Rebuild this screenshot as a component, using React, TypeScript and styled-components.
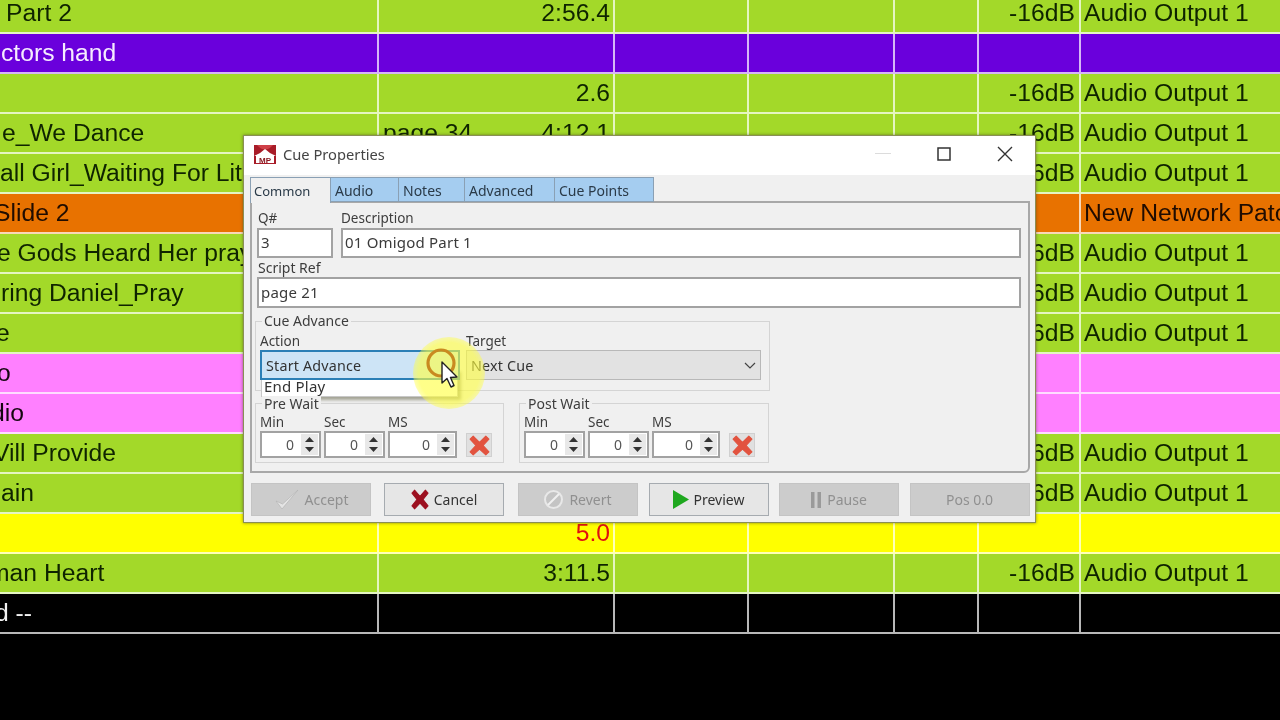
import styled, { createGlobalStyle } from 'styled-components'

const GlobalStyle = createGlobalStyle`
  html, body { margin: 0; padding: 0; background: #000; overflow: hidden; }
  * { box-sizing: border-box; }
`

const COLORS: Record<string, { bg: string; fg: string }> = {
  green: { bg: '#a3d929', fg: '#0f2400' },
  purple: { bg: '#6a00dc', fg: '#f6ecff' },
  orange: { bg: '#e87200', fg: '#200c00' },
  pink: { bg: '#ff80ff', fg: '#14060f' },
  yellow: { bg: '#ffff00', fg: '#e01010' },
  black: { bg: '#000000', fg: '#f2f2f2' },
}

interface Cue {
  color: keyof typeof COLORS
  name?: string
  indent?: number
  page?: string
  time?: string
  level?: string
  output?: string
}

const AUDIO = { level: '-16dB', output: 'Audio Output 1' }

const cues: Cue[] = [
  { color: 'green', name: 'Part 2', indent: 6, time: '2:56.4', ...AUDIO },
  { color: 'purple', name: 'ctors hand', indent: 1 },
  { color: 'green', time: '2.6', ...AUDIO },
  { color: 'green', name: 'e_We Dance', indent: 2, page: 'page 34', time: '4:12.1', ...AUDIO },
  { color: 'green', name: 'all Girl_Waiting For Lit', ...AUDIO },
  { color: 'orange', name: 'Slide 2', indent: -6, output: 'New Network Patch' },
  { color: 'green', name: 'e Gods Heard Her pray', indent: -3, ...AUDIO },
  { color: 'green', name: 'ring Daniel_Pray', indent: 1, ...AUDIO },
  { color: 'green', name: 'e', indent: -4, ...AUDIO },
  { color: 'pink', name: 'o', indent: -3 },
  { color: 'pink', name: 'dio', indent: -9 },
  { color: 'green', name: 'Vill Provide', indent: -7, ...AUDIO },
  { color: 'green', name: 'ain', indent: 1, ...AUDIO },
  { color: 'yellow', time: '5.0' },
  { color: 'green', name: 'man Heart', indent: -11, time: '3:11.5', ...AUDIO },
  { color: 'black', name: 'd --', indent: -5 },
]

const Screen = styled.div`
  position: relative;
  width: 1280px;
  height: 720px;
  overflow: hidden;
  background: #000;
  filter: blur(0.35px);
`

const CueTable = styled.div`
  margin-top: -6px;
  font-family: 'Liberation Sans', Arial, sans-serif;
  font-size: 24.7px;
`

const CueRow = styled.div<{ $color: keyof typeof COLORS }>`
  display: grid;
  grid-template-columns: 379px 236px 134px 146px 84px 102px 199px;
  height: 40px;
  background: ${(p) => COLORS[p.$color].bg};
  color: ${(p) => COLORS[p.$color].fg};
  border-bottom: 2px solid rgba(255, 255, 255, 0.72);
`

const Cell = styled.div`
  display: flex;
  align-items: center;
  justify-content: space-between;
  padding: 0 4px 0 0;
  white-space: nowrap;
  overflow: hidden;
  border-right: 2px solid rgba(255, 255, 255, 0.72);
  &:last-child { border-right: 0; padding-left: 3px; }
`

const CueName = styled.span<{ $indent?: number }>`
  margin-left: ${(p) => p.$indent ?? 0}px;
`

const TimeCell = styled(Cell)`
  padding: 0 3px 0 4px;
`

const TimeText = styled.span`
  margin-left: auto;
`

const LevelCell = styled(Cell)`
  justify-content: flex-end;
`

const Dialog = styled.div`
  position: absolute;
  z-index: 1;
  left: 243px;
  top: 135px;
  width: 793px;
  height: 388px;
  background: #f0f0f0;
  border: 1px solid #8a8f55;
  box-shadow: 0 0 3px rgba(60, 60, 30, 0.6);
  font-family: 'Noto Sans', Tahoma, sans-serif;
  font-size: 14px;
  color: #333;
`

const TitleBar = styled.div`
  display: flex;
  align-items: center;
  height: 39px;
  background: #fff;
  padding: 0 0 3px 10px;
`

const TitleText = styled.div`
  margin-left: 7px;
  font-size: 14.7px;
  color: #444;
`

const WindowButtons = styled.div`
  display: flex;
  margin-left: auto;
  align-items: center;
`

const WindowButton = styled.div`
  display: flex;
  align-items: center;
  justify-content: center;
  width: 61px;
  height: 36px;
`

const Body = styled.div`
  padding: 2px 5px 0 6px;
`

const TabStrip = styled.div`
  display: flex;
  height: 25px;
`

const Tab = styled.div<{ $active?: boolean; $width: number }>`
  display: flex;
  align-items: center;
  width: ${(p) => p.$width}px;
  height: ${(p) => (p.$active ? 26 : 25)}px;
  padding-left: ${(p) => (p.$active ? 3 : 4)}px;
  padding-top: ${(p) => (p.$active ? 1 : 1)}px;
  background: ${(p) => (p.$active ? '#f0f0f0' : '#a5cdf0')};
  border: 1px solid #8aa0b4;
  border-left-width: ${(p) => (p.$active ? 1 : 0)}px;
  border-bottom-width: ${(p) => (p.$active ? 0 : 1)}px;
  position: relative;
  z-index: ${(p) => (p.$active ? 1 : 0)};
  color: #2a3a48;
  font-size: ${(p) => (p.$active ? 13 : 14)}px;
`

const TabPage = styled.div`
  height: 272px;
  border: 2px solid #a8a8a8;
  border-bottom-right-radius: 6px;
  padding: 8px 7px 0 5px;
  margin-top: -1px;
`

const TopRow = styled.div`
  display: grid;
  grid-template-columns: 76px 1fr;
  column-gap: 8px;
`

const Caption = styled.div`
  height: 17px;
  line-height: 15px;
  color: #3d3d3d;
  font-size: 13.5px;
  white-space: nowrap;
`

const FieldCaption = styled(Caption)`
  padding-left: 1px;
`

const ComboCaption = styled(Caption)`
  line-height: 17px;
`

const ScriptCaption = styled(FieldCaption)`
  height: 19px;
  line-height: 20px;
  font-size: 14px;
`

const TextField = styled.div`
  display: flex;
  align-items: center;
  height: 30px;
  padding: 0 0 2px 2px;
  background: #fff;
  border: 2px solid #a2a2a2;
  color: #3a3a3a;
  font-size: 15px;
  letter-spacing: 0.2px;
`

const ScriptField = styled(TextField)`
  height: 31px;
`

const Group = styled.div<{ $height: number; $width: number }>`
  position: relative;
  width: ${(p) => p.$width}px;
  height: ${(p) => p.$height}px;
  border: 1px solid #d4d4d4;
  padding: 11px 4px 0;
`

const CueGroup = styled(Group)`
  margin: 13px 0 12px -2px;
`

const GroupTitle = styled.div`
  position: absolute;
  top: -8px;
  left: 6px;
  padding: 0 2px;
  line-height: 15px;
  font-size: 14px;
  background: #f0f0f0;
  color: #3d3d3d;
`

const CueGroupTitle = styled(GroupTitle)`
  top: -9px;
`

const ComboRow = styled.div`
  display: flex;
  gap: 6px;
`

const ComboField = styled.div<{ $width: number }>`
  position: relative;
  width: ${(p) => p.$width}px;
`

const Combo = styled.div<{ $focused?: boolean }>`
  position: relative;
  z-index: 1;
  display: flex;
  align-items: center;
  justify-content: space-between;
  height: 30px;
  padding: 1px 4px 0 4px;
  background: ${(p) => (p.$focused ? '#cde4f6' : '#e2e2e2')};
  border: ${(p) => (p.$focused ? '2px solid #2b7fb6' : '1px solid #b8b8b8')};
  color: #333;
  font-size: 14.3px;
  letter-spacing: 0.2px;
`

const ComboList = styled.div`
  position: absolute;
  left: 1px;
  top: 36px;
  width: 197px;
  height: 28px;
  padding: 8px 0 0 2px;
  line-height: 16px;
  background: #fff;
  border: 1px solid #c8c8c8;
  box-shadow: 3px 3px 3px rgba(90, 90, 60, 0.5);
  overflow: hidden;
  color: #333;
  font-size: 15px;
  letter-spacing: 0.2px;
`

const WaitRow = styled.div`
  display: flex;
  gap: 15px;
  margin-left: -2px;
`

const WaitGroup = styled(Group)`
  display: flex;
  align-items: flex-end;
  padding: 0 0 4px 4px;
`

const SpinColumn = styled.div<{ $width: number }>`
  width: ${(p) => p.$width}px;
  margin-right: 3px;
`

const SpinCaption = styled(Caption)`
  height: 18px;
  line-height: 18px;
`

const SpinBox = styled.div`
  display: flex;
  align-items: center;
  justify-content: flex-end;
  height: 27px;
  padding-right: 1px;
  background: #fff;
  border: 2px solid #a2a2a2;
  color: #555;
`

const SpinValue = styled.span`
  margin-right: 7px;
`

const SpinArrows = styled.div`
  display: flex;
  flex-direction: column;
  align-items: center;
  justify-content: space-around;
  width: 17px;
  height: 21px;
  background: #e8e8e8;
`

const ClearButton = styled.div`
  display: flex;
  align-items: center;
  justify-content: center;
  width: 26px;
  height: 24px;
  margin: 0 0 1px 6px;
  background: #e0e0e0;
  border: 1px solid #d0d0d0;
`

const Footer = styled.div`
  display: grid;
  grid-template-columns: 133px 133.5px 131px 130px 131px 120px;
  padding: 10px 0 0 1px;
`

const Action = styled.div<{ $enabled?: boolean }>`
  display: flex;
  align-items: center;
  justify-content: center;
  gap: 5px;
  width: 120px;
  height: 33px;
  background: ${(p) => (p.$enabled ? '#e6e6e6' : '#cccccc')};
  border: 1px solid ${(p) => (p.$enabled ? '#a6abb0' : '#c4c4c4')};
  color: ${(p) => (p.$enabled ? '#333' : '#909090')};
`

const PointerMark = styled.div`
  position: absolute;
  z-index: 2;
  left: 404px;
  top: 330px;
  width: 90px;
  height: 90px;
  pointer-events: none;
`

function Logo() {
  return (
    <svg width="22" height="19" viewBox="0 0 22 19">
      <rect width="22" height="19" fill="#a81c28" />
      <path d="M3 0 Q11 9 19 0 Z" fill="#cf4048" />
      <path d="M0 11 Q6 9 11 4 Q16 9 22 11 Z" fill="#fff" />
      <rect x="2" y="11" width="18" height="7" fill="#fff" />
      <text x="11" y="17.5" textAnchor="middle" fontSize="8" fontWeight="700" fontFamily="Liberation Sans, sans-serif" fill="#8a1820">
        MP
      </text>
    </svg>
  )
}

function Chevron() {
  return (
    <svg width="12" height="7" viewBox="0 0 12 7">
      <path d="M1 1 L6 6 L11 1" fill="none" stroke="#444" strokeWidth="1.2" />
    </svg>
  )
}

function SpinButtons() {
  return (
    <SpinArrows>
      <svg width="9" height="5" viewBox="0 0 9 5">
        <path d="M4.5 0 L9 5 L0 5 Z" fill="#333" />
      </svg>
      <svg width="9" height="5" viewBox="0 0 9 5">
        <path d="M0 0 L9 0 L4.5 5 Z" fill="#333" />
      </svg>
    </SpinArrows>
  )
}

function CrossIcon({ color, width, height }: { color: string; width: number; height: number }) {
  return (
    <svg width={width} height={height} viewBox="0 0 20 20" preserveAspectRatio="none">
      <path
        d="M1 4 L4 1 L10 7 L16 1 L19 4 L13.5 10 L19 16 L16 19 L10 13.5 L4 19 L1 16 L6.5 10 Z"
        fill={color}
        stroke={color}
        strokeLinejoin="round"
      />
    </svg>
  )
}

function WaitFields({ title, lastWidth }: { title: string; lastWidth: number }) {
  return (
    <WaitGroup $width={title === 'Pre Wait' ? 249 : 250} $height={60}>
      <GroupTitle>{title}</GroupTitle>
      <SpinColumn $width={61}>
        <SpinCaption>Min</SpinCaption>
        <SpinBox>
          <SpinValue>0</SpinValue>
          <SpinButtons />
        </SpinBox>
      </SpinColumn>
      <SpinColumn $width={61}>
        <SpinCaption>Sec</SpinCaption>
        <SpinBox>
          <SpinValue>0</SpinValue>
          <SpinButtons />
        </SpinBox>
      </SpinColumn>
      <SpinColumn $width={lastWidth}>
        <SpinCaption>MS</SpinCaption>
        <SpinBox>
          <SpinValue>0</SpinValue>
          <SpinButtons />
        </SpinBox>
      </SpinColumn>
      <ClearButton>
        <CrossIcon color="#e2533f" width={21} height={21} />
      </ClearButton>
    </WaitGroup>
  )
}

export default function App() {
  return (
    <Screen>
      <GlobalStyle />
      <CueTable>
        {cues.map((cue, i) => (
          <CueRow key={i} $color={cue.color}>
            <Cell>
              <CueName $indent={cue.indent}>{cue.name}</CueName>
            </Cell>
            <TimeCell>
              {cue.page}
              <TimeText>{cue.time}</TimeText>
            </TimeCell>
            <Cell />
            <Cell />
            <Cell />
            <LevelCell>{cue.level}</LevelCell>
            <Cell>{cue.output}</Cell>
          </CueRow>
        ))}
      </CueTable>

      <Dialog>
        <TitleBar>
          <Logo />
          <TitleText>Cue Properties</TitleText>
          <WindowButtons>
            <WindowButton>
              <svg width="16" height="2" viewBox="0 0 16 2">
                <rect width="16" height="1" fill="#dcdcdc" />
              </svg>
            </WindowButton>
            <WindowButton>
              <svg width="14" height="14" viewBox="0 0 14 14">
                <rect x="1" y="1" width="12" height="12" fill="none" stroke="#333" strokeWidth="1.5" />
              </svg>
            </WindowButton>
            <WindowButton>
              <svg width="16" height="16" viewBox="0 0 16 16">
                <path d="M1 1 L15 15 M15 1 L1 15" stroke="#333" strokeWidth="1.4" />
              </svg>
            </WindowButton>
          </WindowButtons>
        </TitleBar>
        <Body>
          <TabStrip>
            <Tab $active $width={81}>Common</Tab>
            <Tab $width={68}>Audio</Tab>
            <Tab $width={66}>Notes</Tab>
            <Tab $width={90}>Advanced</Tab>
            <Tab $width={99}>Cue Points</Tab>
          </TabStrip>
          <TabPage>
            <TopRow>
              <div>
                <FieldCaption>Q#</FieldCaption>
                <TextField>3</TextField>
              </div>
              <div>
                <Caption>Description</Caption>
                <TextField>01 Omigod Part 1</TextField>
              </div>
            </TopRow>
            <ScriptCaption>Script Ref</ScriptCaption>
            <ScriptField>page 21</ScriptField>
            <CueGroup $width={515} $height={70}>
              <CueGroupTitle>Cue Advance</CueGroupTitle>
              <ComboRow>
                <ComboField $width={200}>
                  <ComboCaption>Action</ComboCaption>
                  <Combo $focused>Start Advance</Combo>
                  <ComboList>End Play</ComboList>
                </ComboField>
                <ComboField $width={295}>
                  <ComboCaption>Target</ComboCaption>
                  <Combo>
                    Next Cue
                    <Chevron />
                  </Combo>
                </ComboField>
              </ComboRow>
            </CueGroup>
            <WaitRow>
              <WaitFields title="Pre Wait" lastWidth={69} />
              <WaitFields title="Post Wait" lastWidth={68} />
            </WaitRow>
          </TabPage>
          <Footer>
            <Action>
              <svg width="26" height="22" viewBox="0 0 26 22">
                <path d="M2 12 L8 20 L24 1 L8.5 15 Z" fill="#e4e4e4" stroke="#b4b4b4" strokeWidth="0.7" />
              </svg>
              Accept
            </Action>
            <Action $enabled>
              <CrossIcon color="#9c1020" width={18} height={21} />
              Cancel
            </Action>
            <Action>
              <svg width="21" height="21" viewBox="0 0 21 21">
                <circle cx="10.5" cy="10.5" r="8.5" fill="#c4c4c4" stroke="#e8e8e8" strokeWidth="2" />
                <path d="M5 16 L16 5" stroke="#f0f0f0" strokeWidth="2" />
              </svg>
              Revert
            </Action>
            <Action $enabled>
              <svg width="16" height="19" viewBox="0 0 16 19">
                <path d="M0 0 L16 9.5 L0 19 Z" fill="#1fa81f" />
              </svg>
              Preview
            </Action>
            <Action>
              <svg width="12" height="16" viewBox="0 0 12 16">
                <rect x="1" width="3.5" height="16" fill="#9a9a9a" />
                <rect x="7.5" width="3.5" height="16" fill="#9a9a9a" />
              </svg>
              Pause
            </Action>
            <Action>Pos 0.0</Action>
          </Footer>
        </Body>
      </Dialog>

      <PointerMark>
        <svg width="90" height="90" viewBox="0 0 90 90">
          <defs>
            <radialGradient id="halo">
              <stop offset="0.85" stopColor="#ffff40" stopOpacity="0.62" />
              <stop offset="1" stopColor="#ffff40" stopOpacity="0.4" />
            </radialGradient>
          </defs>
          <circle cx="45" cy="43" r="36" fill="url(#halo)" />
          <circle cx="37" cy="33" r="13" fill="none" stroke="#c98a20" strokeWidth="3.2" />
          <path
            d="M38 32 L38 53 L43 48.5 L47 57 L50 55.5 L46.5 47.5 L53 47 Z"
            fill="#fff"
            stroke="#222"
            strokeWidth="1.4"
            strokeLinejoin="round"
          />
        </svg>
      </PointerMark>
    </Screen>
  )
}
